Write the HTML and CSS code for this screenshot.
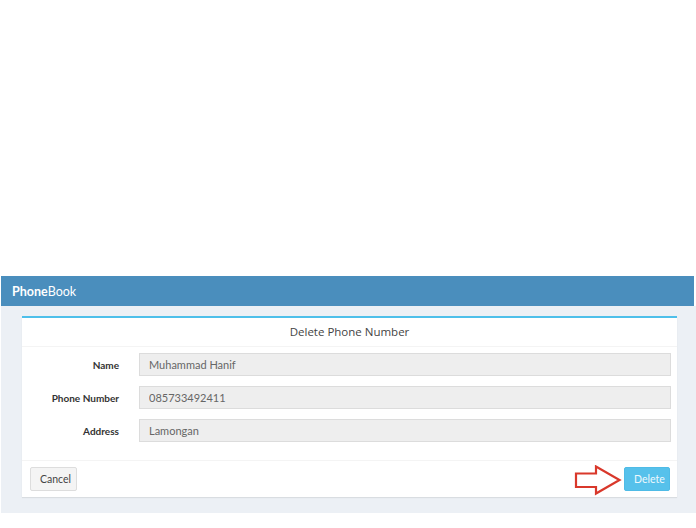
FILE: index.html
```html
<!DOCTYPE html>
<html>
<head>
<meta charset="utf-8">
<link rel="stylesheet" href="styles.css">
</head>
<body>
<div class="app">
  <header class="topbar"><span class="brand"><b>Phone</b>Book</span></header>
  <main class="content">
    <section class="box">
      <div class="box-header">Delete Phone Number</div>
      <form class="box-body">
        <div class="row"><label>Name</label><input class="field" value="Muhammad Hanif" readonly></div>
        <div class="row"><label>Phone Number</label><input class="field" value="085733492411" readonly></div>
        <div class="row"><label>Address</label><input class="field" value="Lamongan" readonly></div>
      </form>
      <div class="box-footer">
        <button class="btn btn-default">Cancel</button>
        <button class="btn btn-info">Delete</button>
        <svg class="arrow" width="48" height="32" viewBox="0 0 48 32">
          <path d="M2 8.5 H22 V1.5 L45.5 15 L22 28.5 V22 H2 Z" fill="#fff" stroke="#d9382b" stroke-width="2.2" stroke-linejoin="miter"/>
        </svg>
      </div>
    </section>
  </main>
</div>
</body>
</html>
```
FILE: styles.css
```css
html, body { margin: 0; padding: 0; background: #fff; }
body { font-family: "Lato", "Open Sans", sans-serif; }
.app { margin-top: 276px; margin-left: 1px; }
.topbar {
  height: 30px;
  background: #4a8ebd;
  color: #fff;
  display: flex;
  align-items: center;
  padding-left: 11px;
  font-size: 12.5px;
  margin-right: 2px;
}
.brand b { font-weight: 700; }
.content {
  background: #ecf0f5;
  padding: 10px 19px 16px 21px;
}
.box {
  background: #fff;
  border-top: 2px solid #4dbfea;
  box-shadow: 0 1px 1px rgba(0,0,0,0.08);
  width: 655px;
  position: relative;
}
.box-header {
  height: 28px;
  line-height: 28px;
  text-align: center;
  font-family: "Open Sans", sans-serif;
  font-size: 11.5px;
  color: #444;
  border-bottom: 1px solid #f4f4f4;
}
.box-body {
  padding: 6px 6px 18px 0;
  display: flex;
  flex-direction: column;
  gap: 10px;
  border-bottom: 1px solid #f4f4f4;
}
.row {
  display: grid;
  grid-template-columns: 97px 1fr;
  column-gap: 20px;
  align-items: center;
}
.row label {
  text-align: right;
  font-weight: 700;
  font-size: 10px;
  color: #333;
}
.field {
  height: 23px;
  box-sizing: border-box;
  border: 1px solid #dcdcdc;
  background: #eee;
  padding: 0 9px;
  font-family: "Lato", sans-serif;
  font-size: 11px;
  color: #666;
  outline: none;
  width: 100%;
}
.box-footer {
  display: flex;
  justify-content: space-between;
  align-items: center;
  padding: 6px 7px 6px 8px;
  position: relative;
}
.btn {
  height: 24px;
  box-sizing: border-box;
  border-radius: 2px;
  font-family: "Lato", sans-serif;
  font-size: 10.5px;
  padding: 0 9px;
}
.btn-default {
  background: #f4f4f4;
  border: 1px solid #ddd;
  color: #444;
  width: 47px;
}
.btn-info {
  background: #56c1eb;
  border: 1px solid #4fbbe6;
  color: #eef8fd;
  width: 46px;
}
.arrow {
  position: absolute;
  left: 552px;
  top: 4px;
}
```
